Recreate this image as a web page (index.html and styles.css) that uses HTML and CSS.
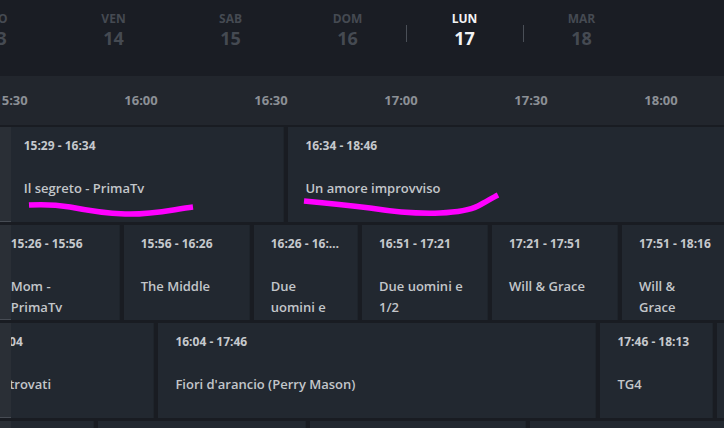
FILE: index.html
```html
<!DOCTYPE html>
<html lang="it">
<head>
<meta charset="utf-8">
<title>Guida TV</title>
<link rel="stylesheet" href="styles.css">
</head>
<body>
<div class="page">
  <header class="days">
    <div class="day"><span class="dname">GIO</span><span class="dnum">13</span></div>
    <div class="day"><span class="dname">VEN</span><span class="dnum">14</span></div>
    <div class="day"><span class="dname">SAB</span><span class="dnum">15</span></div>
    <div class="day"><span class="dname">DOM</span><span class="dnum">16</span></div>
    <span class="sep"></span>
    <div class="day active"><span class="dname">LUN</span><span class="dnum">17</span></div>
    <span class="sep"></span>
    <div class="day"><span class="dname">MAR</span><span class="dnum">18</span></div>
  </header>

  <div class="timebar">
    <div class="tick">15:30</div>
    <div class="tick">16:00</div>
    <div class="tick">16:30</div>
    <div class="tick">17:00</div>
    <div class="tick">17:30</div>
    <div class="tick">18:00</div>
  </div>

  <div class="grid">
    <div class="strip">
      <div class="seg"></div>
      <div class="seg"></div>
      <div class="seg"></div>
      <div class="seg"></div>
    </div>
    <div class="rows">
      <div class="row" style="margin-left:-4.3px">
        <div class="cell" style="width:277.7px"><span class="time">15:29 - 16:34</span><span class="title">Il segreto - PrimaTv</span></div>
        <div class="cell" style="width:568px"><span class="time">16:34 - 18:46</span><span class="title">Un amore improvviso</span></div>
      </div>
      <div class="row" style="margin-left:-17.3px">
        <div class="cell" style="width:126px"><span class="time">15:26 - 15:56</span><span class="title">Mom - PrimaTv</span></div>
        <div class="cell" style="width:126px"><span class="time">15:56 - 16:26</span><span class="title">The Middle</span></div>
        <div class="cell" style="width:104.3px"><span class="time">16:26 - 16:…</span><span class="title">Due uomini e 1/2</span></div>
        <div class="cell" style="width:126px"><span class="time">16:51 - 17:21</span><span class="title">Due uomini e 1/2</span></div>
        <div class="cell" style="width:126px"><span class="time">17:21 - 17:51</span><span class="title">Will &amp; Grace</span></div>
        <div class="cell" style="width:104.3px"><span class="time">17:51 - 18:16</span><span class="title">Will &amp; Grace</span></div>
      </div>
      <div class="row" style="margin-left:-77px">
        <div class="cell" style="width:220.4px"><span class="time">15:11 - 16:04</span><span class="title">Amanti ritrovati</span></div>
        <div class="cell" style="width:438px"><span class="time">16:04 - 17:46</span><span class="title">Fiori d'arancio (Perry Mason)</span></div>
        <div class="cell" style="width:113px"><span class="time">17:46 - 18:13</span><span class="title">TG4</span></div>
        <div class="cell" style="width:200px"><span class="time">18:13 - 19:00</span><span class="title">Tempesta d'amore</span></div>
      </div>
      <div class="row" style="margin-left:-100px">
        <div class="cell" style="width:183px"><span class="time">15:04 - 15:50</span><span class="title">Programma</span></div>
        <div class="cell" style="width:208px"><span class="time">15:50 - 16:39</span><span class="title">Programma</span></div>
        <div class="cell" style="width:216px"><span class="time">16:39 - 17:30</span><span class="title">Programma</span></div>
        <div class="cell" style="width:300px"><span class="time">17:30 - 18:40</span><span class="title">Programma</span></div>
      </div>
    </div>
  </div>

  <svg class="marks" width="724" height="428" viewBox="0 0 724 428">
    <path d="M29 205 C45 204 58 205 70 207 C85 210 100 213 125 214 C150 215 170 210 193 207" />
    <path d="M304 201 C325 203 345 205 370 208 C395 212 415 214 440 213 C460 212 470 210 478 206 C486 202 492 198 498 195" />
  </svg>
</div>
</body>
</html>
```

FILE: styles.css
```css
* { box-sizing: border-box; }

html, body {
  margin: 0;
  padding: 0;
  background: #191c22;
}

body {
  font-family: "Open Sans", "Liberation Sans", sans-serif;
  width: 724px;
  height: 428px;
  overflow: hidden;
}

.page {
  position: relative;
  width: 724px;
  height: 428px;
  overflow: hidden;
}

.days {
  height: 76px;
  background: #1a1d24;
  display: flex;
  margin-left: -62px;
}

.day {
  width: 117px;
  flex: 0 0 117px;
  display: flex;
  flex-direction: column;
  align-items: center;
  padding-top: 10px;
  color: #454a52;
}

.dname {
  font-size: 12px;
  font-weight: 700;
  line-height: 17px;
}

.dnum {
  font-size: 18px;
  font-weight: 700;
  line-height: 22px;
}

.day.active { color: #f2f3f5; }

.sep {
  flex: 0 0 1px;
  width: 1px;
  height: 17px;
  margin: 25px -1px 0 0;
  background: #4a4f57;
}

.timebar {
  height: 49px;
  background: #22262d;
  display: flex;
  margin-left: -54px;
}

.tick {
  flex: 0 0 130px;
  text-align: center;
  line-height: 49px;
  font-size: 13px;
  font-weight: 700;
  color: #8c9096;
}

.grid {
  display: flex;
  padding-top: 2px;
}

.strip {
  flex: 0 0 11px;
  display: flex;
  flex-direction: column;
  gap: 3px;
}

.seg {
  height: 95px;
  flex: 0 0 95px;
  background: #2a2f36;
  border-bottom: 1px solid #474c54;
}

.rows {
  flex: 1;
  overflow: hidden;
  display: flex;
  flex-direction: column;
  gap: 3px;
}

.row {
  display: flex;
  height: 95px;
  flex: 0 0 95px;
}

.cell {
  flex: 0 0 auto;
  height: 95px;
  margin-right: 4px;
  background: #222830;
  box-shadow: inset -1px 0 0 #1e242b;
  padding: 12px 17px 0 17px;
  display: flex;
  flex-direction: column;
  overflow: hidden;
}

.time {
  flex: 0 0 auto;
  font-size: 12px;
  font-weight: 700;
  line-height: 14px;
  color: #c6c9cd;
  white-space: nowrap;
}

.title {
  flex: 0 0 auto;
  margin-top: 25px;
  font-size: 13px;
  font-weight: 600;
  line-height: 21px;
  color: #c3c6ca;
}

.marks {
  position: absolute;
  left: 0;
  top: 0;
  pointer-events: none;
}

.marks path {
  fill: none;
  stroke: #ff00ff;
  stroke-width: 5.5;
  stroke-linecap: butt;
  stroke-linejoin: round;
}
```
